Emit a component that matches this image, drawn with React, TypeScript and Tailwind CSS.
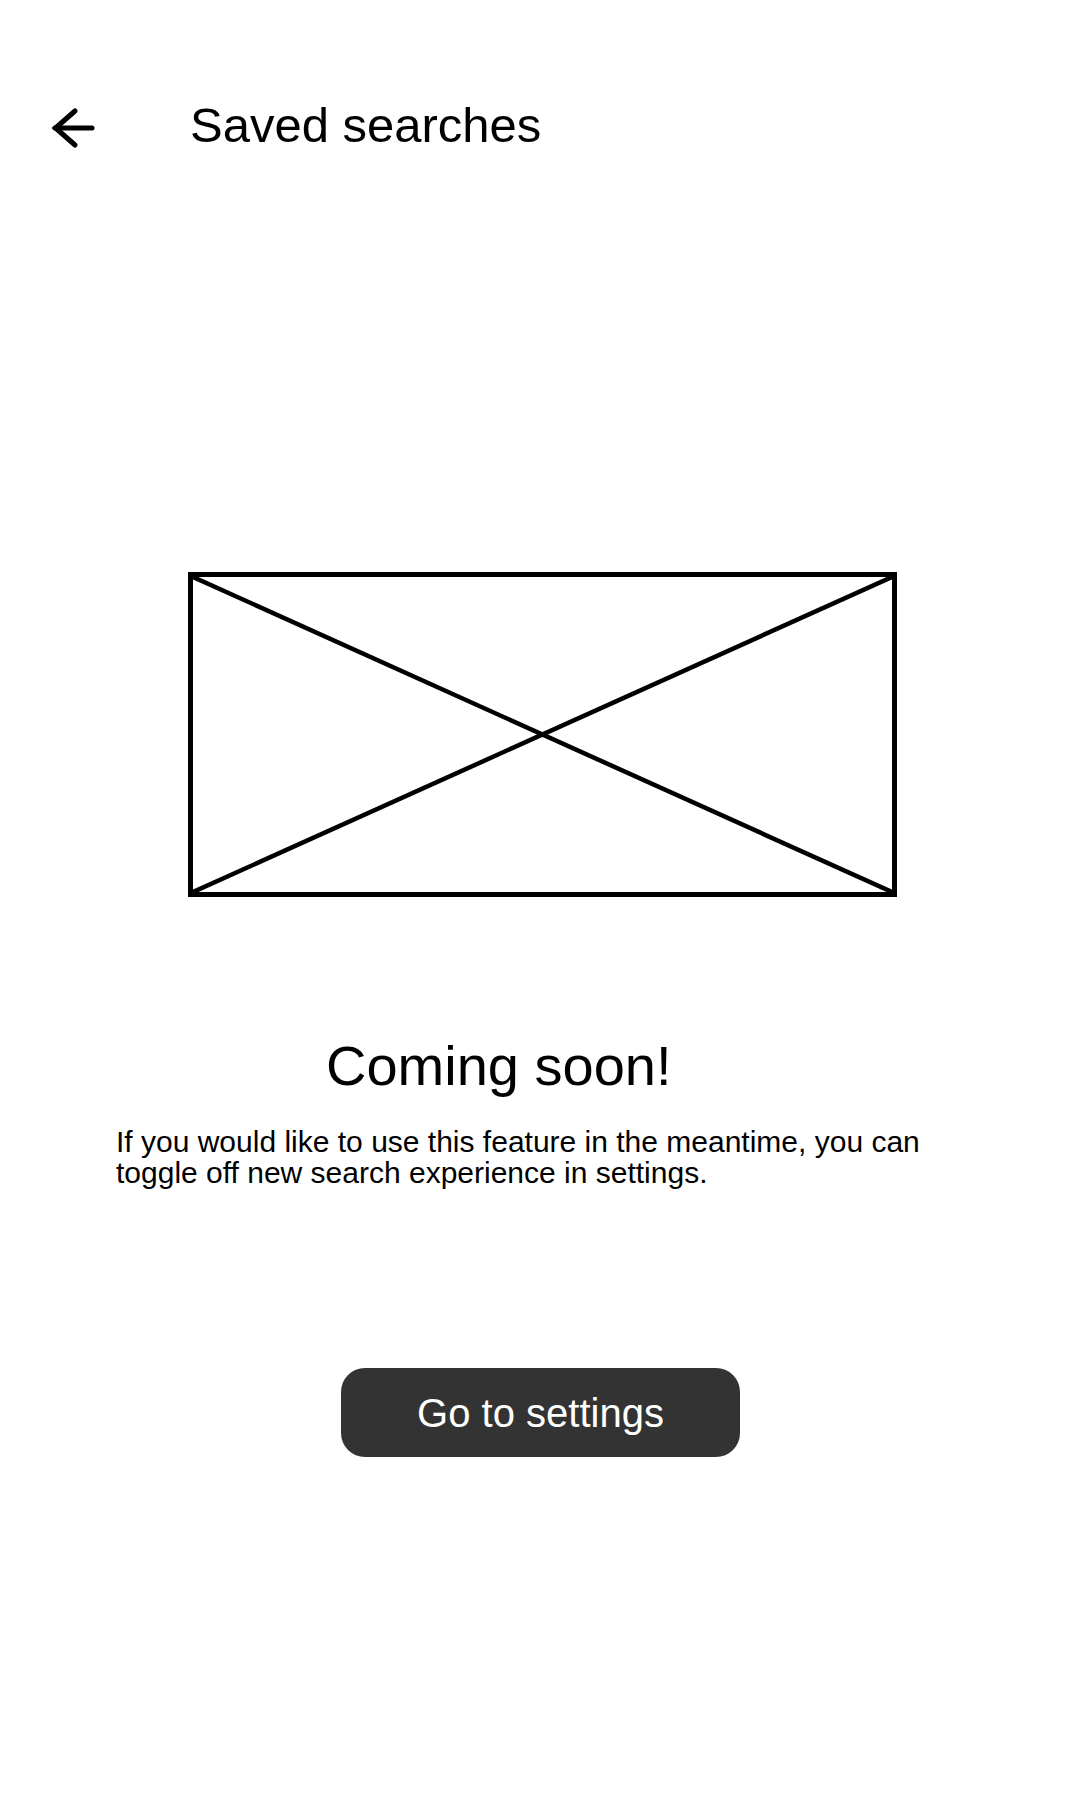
import React from 'react';

export default function App() {
  return (
    <div className="min-h-[1800px] w-[1080px] bg-white text-black font-['Liberation_Sans',Arial,sans-serif]">
      {/* Header */}
      <div className="flex items-start pt-[97px]">
        <svg
          className="ml-[50px] mt-[8px]"
          width="48"
          height="46"
          viewBox="0 0 48 46"
          fill="none"
          stroke="black"
          strokeWidth="5"
        >
          <path d="M25 6 L5.5 23 L25 40" strokeLinecap="round" strokeLinejoin="miter" />
          <path d="M5 23 H42" strokeLinecap="round" />
        </svg>
        <h1 className="ml-[92px] text-[49px] leading-[56px] font-normal">Saved searches</h1>
      </div>

      {/* Placeholder image */}
      <div className="ml-[188px] mt-[419px] w-[709px] h-[325px] border-[5px] border-black">
        <svg className="w-full h-full block" viewBox="0 0 100 100" preserveAspectRatio="none">
          <line x1="0" y1="0" x2="100" y2="100" stroke="black" strokeWidth="4.5" vectorEffect="non-scaling-stroke" />
          <line x1="100" y1="0" x2="0" y2="100" stroke="black" strokeWidth="4.5" vectorEffect="non-scaling-stroke" />
        </svg>
      </div>

      {/* Message */}
      <h2 className="ml-[326px] mt-[137px] text-[56px] leading-[64px] font-normal">Coming soon!</h2>
      <p className="ml-[116px] mt-[28px] w-[840px] text-[30px] leading-[31px]">
        If you would like to use this feature in the meantime, you can toggle off new search experience in settings.
      </p>

      {/* Action */}
      <div className="mt-[180px] ml-[341px]">
        <button className="w-[399px] h-[89px] rounded-[24px] bg-[#333333] text-white text-[40px] flex items-center justify-center">
          Go to settings
        </button>
      </div>
    </div>
  );
}
